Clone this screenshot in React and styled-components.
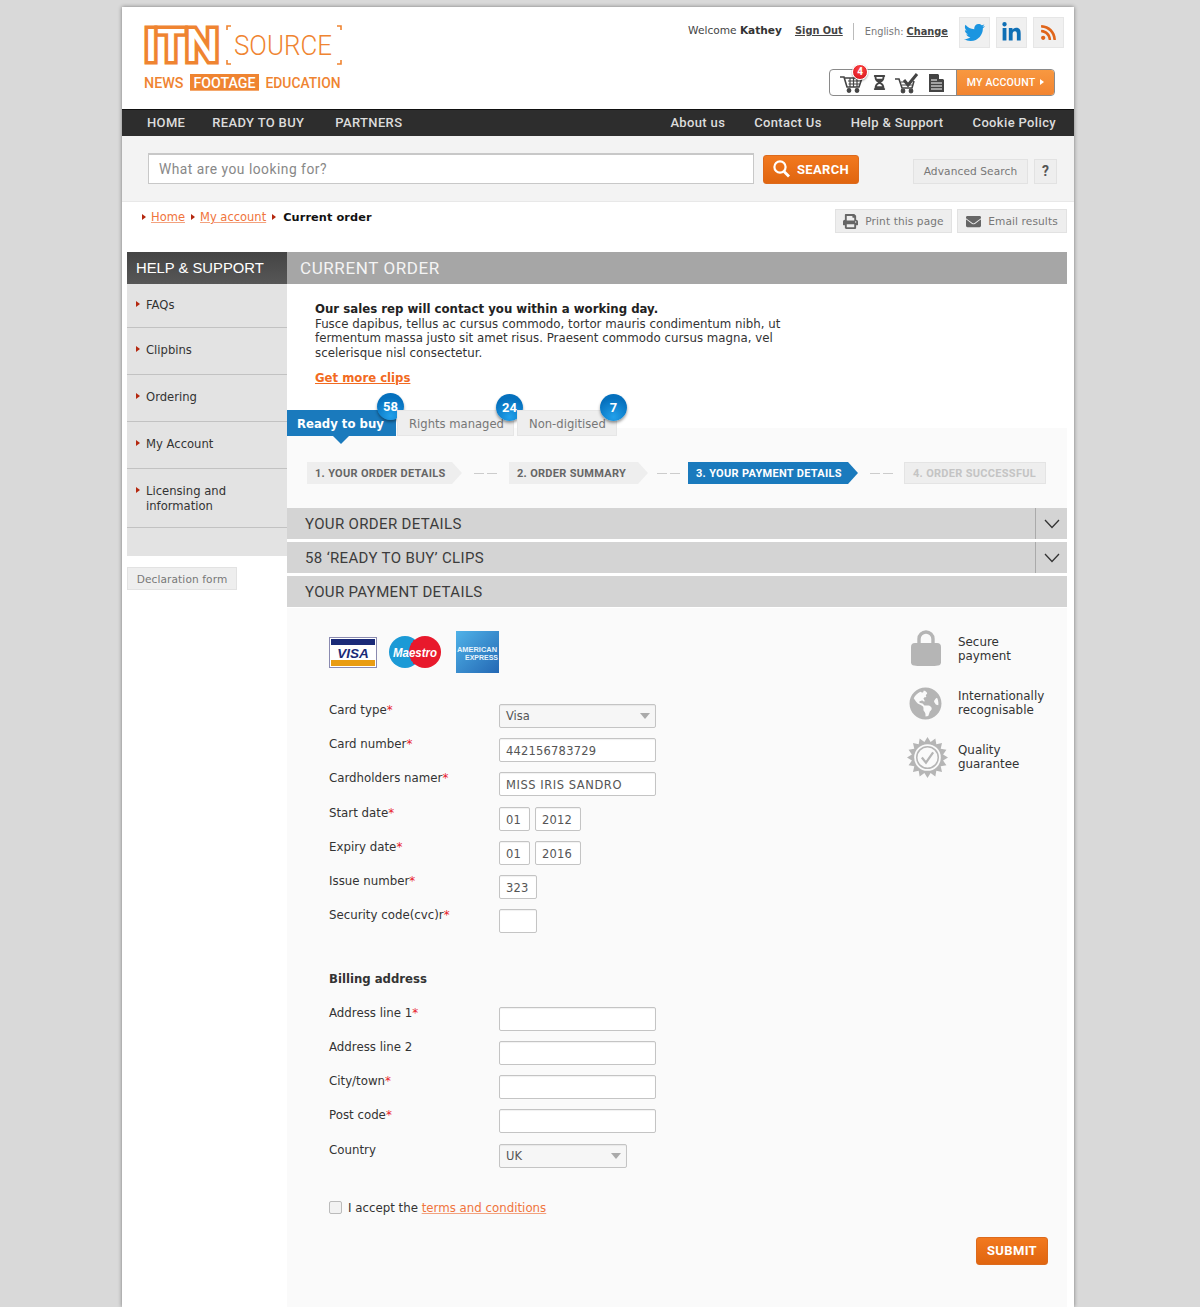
import React from 'react';
import styled, { createGlobalStyle, css } from 'styled-components';
import { FaTwitter, FaLinkedinIn, FaRss, FaPrint, FaEnvelope, FaGlobeAmericas, FaHourglassHalf } from 'react-icons/fa';

const VERDANA = `"DejaVu Sans", Verdana, sans-serif`;
const DIN = `Roboto, "Liberation Sans", sans-serif`;

const GlobalStyle = createGlobalStyle`
  html, body {
    margin: 0;
    height: 1307px;
    overflow: hidden;
    background: #d9d9d9;
  }
  body { font-family: ${VERDANA}; }
  * { box-sizing: border-box; }
`;

const Sheet = styled.div`
  width: 952px;
  height: 1300px;
  margin: 7px 0 0 122px;
  background: #fff;
  box-shadow: 0 0 4px rgba(0, 0, 0, 0.45);
  overflow: hidden;
`;

const Masthead = styled.header`
  height: 102px;
  display: flex;
  justify-content: space-between;
  padding: 10px 10px 0 21px;
`;

const LogoSvg = styled.svg`
  display: block;
  width: 200px;
  height: 70px;
  margin-top: 8px;
  overflow: visible;
`;

const TopRight = styled.div`
  display: flex;
  flex-direction: column;
  align-items: flex-end;
`;

const UserLine = styled.div`
  display: flex;
  align-items: center;
  height: 31px;
`;

const Welcome = styled.span`
  font-size: 10.6px;
  color: #444;
  margin-right: 13px;
  margin-top: -6px;
  b { color: #333; }
`;

const UserLink = styled.a`
  font-size: 9.8px;
  font-weight: bold;
  color: #444;
  text-decoration: underline;
  margin-top: -5px;
`;

const Divider = styled.span`
  width: 1px;
  height: 17px;
  background: #bbb;
  margin: -2px 11px 0 10px;
`;

const Lang = styled.span`
  font-size: 9.8px;
  color: #777;
  margin-right: 11px;
  margin-top: -2px;
  a { font-weight: bold; color: #444; text-decoration: underline; }
`;

const Social = styled.a`
  width: 31px;
  height: 31px;
  margin-left: ${(p) => (p.$first ? 0 : 6)}px;
  display: flex;
  align-items: center;
  justify-content: center;
  background: #f0f0f0;
  border: 1px solid #e6e6e6;
  font-size: ${(p) => p.$size}px;
  color: ${(p) => p.$color};
`;

const AccountBar = styled.div`
  display: flex;
  width: 226px;
  height: 27px;
  margin: 21px 9px 0 0;
  border: 1px solid #8a8a8a;
  border-radius: 4px;
  background: #fff;
`;

const AccountIcons = styled.div`
  position: relative;
  width: 127px;
  display: flex;
  align-items: center;
  padding-left: 9px;
  gap: 7px;
  border-right: 1px solid #8a8a8a;
`;

const CartBadge = styled.span`
  position: absolute;
  left: 22px;
  top: -6px;
  width: 16px;
  height: 16px;
  border-radius: 50%;
  background: radial-gradient(circle at 50% 30%, #f44, #d3101a);
  border: 1px solid #fff;
  color: #fff;
  font: bold 10px/14px ${DIN};
  text-align: center;
  box-shadow: 0 1px 2px rgba(0, 0, 0, 0.4);
`;

const AccountButton = styled.a`
  flex: 1;
  display: flex;
  align-items: center;
  justify-content: center;
  gap: 5px;
  background: linear-gradient(#f89840, #f28430);
  color: #fff;
  font: 500 10.6px ${DIN};
  letter-spacing: 0.15px;
  border-radius: 0 3px 3px 0;
  padding-bottom: 1px;
`;

const TinyArrow = styled.span`
  width: 0;
  height: 0;
  flex: none;
  border-left: 4px solid ${(p) => p.$color || '#fff'};
  border-top: 3.5px solid transparent;
  border-bottom: 3.5px solid transparent;
`;

const NavBar = styled.nav`
  height: 27px;
  display: flex;
  justify-content: space-between;
  align-items: center;
  padding: 0 18px 1px 25px;
  background: #2d2d2d;
  border-top: 1px solid #111;
`;

const NavGroup = styled.div`
  display: flex;
  gap: ${(p) => p.$gap}px;
`;

const NavLink = styled.a`
  margin-left: ${(p) => p.$ml || 0}px;
  font: 500 13px ${DIN};
  letter-spacing: 0.35px;
  color: #dcdcdc;
`;

const SearchBar = styled.div`
  height: 66px;
  display: flex;
  align-items: center;
  background: #f3f3f3;
  border-bottom: 1px solid #e8e8e8;
  padding: 0 17px 0 26px;
`;

const SearchInput = styled.div`
  width: 606px;
  height: 31px;
  padding-left: 10px;
  background: #fff;
  border: 1px solid #c8c8c8;
  border-width: 2px 1px 1px 1px;
  font: 13.8px/29px ${DIN};
  letter-spacing: 0.5px;
  color: #888;
`;

const OrangeButton = styled.a`
  display: inline-flex;
  align-items: center;
  justify-content: center;
  background: linear-gradient(#f2791f, #e0650f);
  border: 1px solid #dd6a1c;
  border-radius: 3px;
  color: #fff;
  font-family: ${DIN};
  font-weight: 700;
  font-size: 13px;
  letter-spacing: 0.35px;
`;

const SearchButton = styled(OrangeButton)`
  width: 96px;
  height: 29px;
  gap: 7px;
  margin: 1px 0 0 9px;
`;

const GreyButton = styled.a`
  display: inline-flex;
  align-items: center;
  justify-content: center;
  gap: 7px;
  height: ${(p) => p.$h || 24}px;
  width: ${(p) => p.$w}px;
  background: #eee;
  border: 1px solid #e2e2e2;
  color: #777;
  font-size: 10.6px;
  letter-spacing: 0.1px;
  svg { color: #666; font-size: 15px; }
`;

const SearchExtras = styled.div`
  margin-left: auto;
  display: flex;
  gap: 6px;
  padding-top: 5px;
`;

const HelpMark = styled(GreyButton)`
  font: bold 14px ${DIN};
  color: #555;
`;

const CrumbRow = styled.div`
  height: 50px;
  display: flex;
  justify-content: space-between;
  padding: 6px 7px 0 20px;
`;

const Crumbs = styled.div`
  display: flex;
  align-items: center;
  height: 18px;
  font-size: 11.5px;
  a { color: #f0743c; text-decoration: underline; text-decoration-color: #f3a27e; margin: 0 6px 0 5px; }
  b { color: #111; margin-left: 7px; letter-spacing: 0.1px; font-size: 11.3px; }
`;

const CrumbActions = styled.div`
  display: flex;
  gap: 5px;
  padding-top: 1px;
`;

const Columns = styled.div`
  display: flex;
  padding-left: 5px;
  width: 945px;
`;

const Sidebar = styled.aside`
  width: 160px;
  flex: none;
`;

const SideHead = styled.div`
  height: 32px;
  padding-left: 9px;
  background: linear-gradient(#444, #575757);
  color: #fff;
  font: 14.8px/33px "Liberation Sans", Arial, sans-serif;
`;

const SideItem = styled.a`
  display: flex;
  gap: 6px;
  height: ${(p) => p.$h}px;
  padding: ${(p) => p.$top}px 0 0 9px;
  background: #e3e3e3;
  border-bottom: 1px solid #c2c2c2;
  font-size: 11.6px;
  line-height: 15px;
  color: #333;
  ${TinyArrow} { margin-top: 3px; }
`;

const SideFill = styled.div`
  height: 28px;
  background: #e3e3e3;
`;

const DeclarationWrap = styled.div`
  padding-top: 11px;
`;

const Main = styled.main`
  flex: 1;
  min-width: 0;
`;

const PageTitle = styled.h1`
  margin: 0;
  height: 32px;
  padding-left: 13px;
  background: #a6a6a6;
  color: #f4f4f4;
  font: 400 17px/33px ${DIN};
  letter-spacing: 0.6px;
`;

const Intro = styled.section`
  padding: 18px 0 0 28px;
  height: 126px;
  width: 520px;
  font-size: 11.8px;
  line-height: 14.6px;
  color: #333;
  strong { display: block; color: #222; font-size: 11.75px; }
  p { margin: 0; }
`;

const MoreLink = styled.a`
  display: inline-block;
  margin-top: 11px;
  font-weight: bold;
  color: #f26a21;
  text-decoration: underline;
  font-size: 11.7px;
`;

const TabRow = styled.div`
  position: relative;
  z-index: 1;
  display: flex;
  gap: 1px;
  height: 26px;
  margin-bottom: -8px;
`;

const Tab = styled.a`
  position: relative;
  width: ${(p) => p.$w}px;
  margin-left: ${(p) => p.$ml || 0}px;
  display: flex;
  align-items: center;
  padding: 1px 0 0 ${(p) => p.$pl}px;
  font-size: 11.6px;
  ${(p) => (p.$active
    ? css`
      background: #1a7abd;
      color: #fff;
      font-weight: bold;
      font-size: 11.7px;
      &::after {
        content: '';
        position: absolute;
        left: 46px;
        top: 26px;
        border-top: 8px solid #1a7abd;
        border-left: 8px solid transparent;
        border-right: 8px solid transparent;
      }
    `
    : css`
      background: #eee;
      border: 1px solid #e6e6e6;
      color: #777;
    `)}
`;

const CountBadge = styled.span`
  position: absolute;
  right: ${(p) => p.$right}px;
  top: -17px;
  width: 27px;
  height: 27px;
  border-radius: 50%;
  background: radial-gradient(circle at 50% 85%, #22a0ea, #0570bd 70%);
  color: #fff;
  font: bold 13px/27px ${DIN};
  text-align: center;
  box-shadow: 0 2px 3px rgba(0, 0, 0, 0.4);
`;

const StepsPanel = styled.div`
  height: 80px;
  padding: 34px 0 0 20px;
  display: flex;
  background: #fafafa;
`;

const STEP_TONES = {
  done: css`background: #eee; color: #666;`,
  active: css`background: #1a7abd; color: #fff;`,
};

const Step = styled.span`
  height: 22px;
  width: ${(p) => p.$w}px;
  display: flex;
  align-items: center;
  padding-left: 8px;
  font: 700 11px ${DIN};
  letter-spacing: 0.3px;
  white-space: nowrap;
  clip-path: polygon(0 0, calc(100% - 10px) 0, 100% 50%, calc(100% - 10px) 100%, 0 100%);
  ${(p) => STEP_TONES[p.$tone]}
`;

const LastStep = styled.span`
  height: 22px;
  width: 142px;
  display: flex;
  align-items: center;
  padding-left: 8px;
  font: 700 11px ${DIN};
  letter-spacing: 0.3px;
  white-space: nowrap;
  background: #eee;
  border: 1px solid #e4e4e4;
  color: #c4c4c4;
`;

const StepDash = styled.span`
  width: ${(p) => p.$w}px;
  height: 22px;
  display: flex;
  align-items: center;
  justify-content: center;
  gap: 3px;
  i { width: 10px; height: 1px; background: #ccc; }
`;

const AccordionBar = styled.div`
  height: 31px;
  margin-bottom: 3px;
  display: flex;
  align-items: center;
  justify-content: space-between;
  background: #d4d4d4;
  padding-left: 18px;
  font: 400 15px ${DIN};
  letter-spacing: 0.35px;
  color: #3c3c3c;
`;

const ChevronCell = styled.span`
  width: 32px;
  align-self: stretch;
  display: flex;
  align-items: center;
  justify-content: center;
  border-left: 1px solid #aaa;
`;

const FormPanel = styled.div`
  height: 700px;
  margin-top: -2px;
  display: flex;
  justify-content: space-between;
  background: #fafafa;
  padding: 23px 19px 0 42px;
`;

const FormColumn = styled.form`
  width: 719px;
  flex: none;
  margin-right: -100%;
`;

const CardLogos = styled.div`
  display: flex;
  align-items: center;
  height: 42px;
  gap: 12px;
  margin-bottom: 31px;
`;

const AmexSvg = styled.svg`
  margin-left: 3px;
`;

const DocSvg = styled.svg`
  margin-left: 2px;
`;

const Row = styled.div`
  display: flex;
  height: 34.2px;
`;

const Label = styled.label`
  width: 170px;
  flex: none;
  margin-top: -1px;
  font-size: 11.8px;
  line-height: 14px;
  color: #333;
  i { color: #e8202a; font-style: normal; }
`;

const fieldBox = css`
  height: 24px;
  margin-right: 5px;
  padding-left: 6px;
  background: #fff;
  border: 1px solid #c4c4c4;
  border-radius: 2px;
  box-shadow: inset 0 1px 1px rgba(0, 0, 0, 0.06);
  font-size: 11.5px;
  line-height: 24px;
  color: #555;
`;

const Field = styled.div`
  ${fieldBox}
  width: ${(p) => p.$w}px;
  letter-spacing: ${(p) => p.$ls || 0.2}px;
`;

const SelectField = styled.div`
  ${fieldBox}
  width: ${(p) => p.$w}px;
  display: flex;
  align-items: center;
  justify-content: space-between;
  padding-right: 5px;
  background: #f6f6f6;
  &::after {
    content: '';
    border-top: 6px solid #aaa;
    border-left: 5px solid transparent;
    border-right: 5px solid transparent;
  }
`;

const SectionLabel = styled.div`
  margin: 29px 0 20.6px;
  font-size: 11.7px;
  font-weight: bold;
  line-height: 14px;
  color: #333;
`;

const Accept = styled.div`
  display: flex;
  align-items: center;
  margin-top: 23px;
  gap: 6px;
  font-size: 11.8px;
  line-height: 14px;
  color: #333;
  a { color: #f0743c; text-decoration: underline; text-decoration-color: #f3a27e; }
`;

const CheckBox = styled.span`
  width: 13px;
  height: 13px;
  background: #f2f2f2;
  border: 1px solid #bbb;
  border-radius: 2px;
`;

const SubmitRow = styled.div`
  display: flex;
  justify-content: flex-end;
  margin-top: 22px;
`;

const SubmitButton = styled(OrangeButton)`
  width: 72px;
  height: 28px;
  padding-bottom: 1px;
`;

const Features = styled.ul`
  list-style: none;
  width: 141px;
  margin: -9px 0 0 auto;
  padding: 0;
`;

const Feature = styled.li`
  display: flex;
  align-items: center;
  height: ${(p) => p.$h}px;
`;

const FeatureIcon = styled.span`
  width: 51px;
  flex: none;
  padding-left: ${(p) => p.$pad}px;
  margin-top: ${(p) => p.$shift || 0}px;
  display: flex;
  color: #b5b5b5;
  font-size: ${(p) => p.$size || 32}px;
`;

const FeatureText = styled.span`
  font-size: 11.9px;
  line-height: 14px;
  color: #333;
`;

const WireCart = () => (
  <svg width="26" height="22" viewBox="0 0 26 22" fill="none" stroke="#444" strokeWidth="1.2">
    <path d="M1 5h4l3 10h12l3-9H6" strokeWidth="1.6" />
    <path d="M9 9h13M9.5 12h11M11 6v9M14.5 6v9M18 6v9" />
    <circle cx="10" cy="18.5" r="1.8" fill="#444" />
    <circle cx="18" cy="18.5" r="1.8" fill="#444" />
  </svg>
);

const CheckedCart = () => (
  <svg width="26" height="22" viewBox="0 0 26 22" fill="none" stroke="#444" strokeWidth="1.2">
    <path d="M1 7h4l3 9h10l2-7" strokeWidth="1.6" />
    <path d="M7 10h6M8 13h10" />
    <path d="M10 8l4 5 9-11" strokeWidth="3" />
    <circle cx="9" cy="19" r="1.8" fill="#444" />
    <circle cx="17" cy="19" r="1.8" fill="#444" />
  </svg>
);

const DocIcon = () => (
  <DocSvg width="15" height="18" viewBox="0 0 15 18">
    <path d="M0 0h9l6 6v12H0z" fill="#444" />
    <path d="M10 0l5 5h-5z" fill="#fff" />
    <path d="M2 6h6M2 9h11M2 12h11M2 15h11" stroke="#fff" strokeWidth="1" />
  </DocSvg>
);

const SearchGlyph = () => (
  <svg width="17" height="18" viewBox="0 0 17 18" fill="none" stroke="#fff" strokeWidth="2.2">
    <circle cx="7" cy="7" r="5.6" />
    <path d="M11 11.5l5 5" strokeWidth="2.8" />
  </svg>
);

const Chevron = () => (
  <svg width="16" height="10" viewBox="0 0 16 10" fill="none" stroke="#333" strokeWidth="1.3">
    <path d="M1 1l7 7.5L15 1" />
  </svg>
);

const LockIcon = () => (
  <svg width="30" height="36" viewBox="0 0 30 36">
    <path d="M8 15V9a7 7 0 0 1 14 0v6" fill="none" stroke="#b5b5b5" strokeWidth="3.4" />
    <path d="M4 13h22a4 4 0 0 1 4 4v15a3 3 0 0 1-3 3.4 60 60 0 0 1-24 0 3 3 0 0 1-3-3.4V17a4 4 0 0 1 4-4z" fill="#b5b5b5" />
  </svg>
);

const sealPoints = Array.from({ length: 32 }, (_, i) => {
  const r = i % 2 ? 15.5 : 20;
  const a = (i * Math.PI) / 16;
  return `${20 + r * Math.cos(a)},${20 + r * Math.sin(a)}`;
}).join(' ');

const Seal = () => (
  <svg width="41" height="41" viewBox="0 0 40 40">
    <polygon points={sealPoints} fill="#b5b5b5" />
    <circle cx="20" cy="20" r="13" fill="#fafafa" />
    <circle cx="20" cy="20" r="10.5" fill="none" stroke="#b5b5b5" strokeWidth="1.5" />
    <path d="M14.5 20l4 5 7-10" fill="none" stroke="#b5b5b5" strokeWidth="2.2" />
  </svg>
);

const Logo = () => (
  <LogoSvg viewBox="0 0 200 70">
    <text x="1.5" y="35.5" fontFamily="Roboto" fontWeight="500" fontSize="44" fill="#fff" stroke="#ef8431"
      strokeWidth="7" paintOrder="stroke" textLength="74" lengthAdjust="spacingAndGlyphs">ITN</text>
    <path d="M84 5V1h4M84 35v4h4M194 1h4v4M198 35v4h-4" fill="none" stroke="#ef8431" strokeWidth="1.6" />
    <text x="91" y="29.5" fontFamily="Roboto" fontWeight="300" fontSize="27.5" fill="#ef8431"
      textLength="98" lengthAdjust="spacingAndGlyphs">SOURCE</text>
    <text x="1" y="63" fontFamily="Roboto" fontWeight="500" fontSize="15.5" fill="#ef8431"
      textLength="39.5" lengthAdjust="spacingAndGlyphs">NEWS</text>
    <rect x="47" y="49" width="69" height="16.7" fill="#ef8431" />
    <text x="50.5" y="63" fontFamily="Roboto" fontWeight="500" fontSize="15.5" fill="#fff"
      textLength="62" lengthAdjust="spacingAndGlyphs">FOOTAGE</text>
    <text x="122.5" y="63" fontFamily="Roboto" fontWeight="500" fontSize="15.5" fill="#ef8431"
      textLength="75" lengthAdjust="spacingAndGlyphs">EDUCATION</text>
  </LogoSvg>
);

const VisaLogo = () => (
  <svg width="48" height="31" viewBox="0 0 48 31">
    <rect x=".5" y=".5" width="47" height="30" fill="#fff" stroke="#8a8ab0" />
    <rect x="2" y="2" width="44" height="6" fill="#1a2a78" />
    <rect x="2" y="23" width="44" height="6" fill="#e99c12" />
    <text x="24" y="20.5" textAnchor="middle" fontFamily="Liberation Sans" fontWeight="bold" fontStyle="italic" fontSize="13.5" fill="#1a2a78">VISA</text>
  </svg>
);

const MaestroLogo = () => (
  <svg width="52" height="32" viewBox="0 0 52 32">
    <circle cx="16" cy="16" r="16" fill="#1b9ad6" />
    <circle cx="36" cy="16" r="16" fill="#e8192c" />
    <path d="M22 8h8M21 11h10M21 21h10M22 24h8M24 27h4M24 5h4" stroke="#e8192c" strokeWidth="1.3" />
    <text x="26" y="20.5" textAnchor="middle" fontFamily="Liberation Sans" fontWeight="bold" fontStyle="italic" fontSize="12" fill="#fff" textLength="44" lengthAdjust="spacingAndGlyphs">Maestro</text>
  </svg>
);

const AmexLogo = () => (
  <AmexSvg width="43" height="42" viewBox="0 0 43 42">
    <defs>
      <linearGradient id="amexFill" x1="0" y1="0" x2="1" y2="1">
        <stop offset="0" stopColor="#4fb2e8" />
        <stop offset="1" stopColor="#2468b4" />
      </linearGradient>
    </defs>
    <rect width="43" height="42" fill="url(#amexFill)" />
    <text x="1" y="21" fontFamily="Liberation Sans" fontWeight="bold" fontSize="7.5" fill="#e8f4fc" textLength="40" lengthAdjust="spacingAndGlyphs">AMERICAN</text>
    <text x="9" y="29" fontFamily="Liberation Sans" fontWeight="bold" fontSize="7.5" fill="#e8f4fc" textLength="33" lengthAdjust="spacingAndGlyphs">EXPRESS</text>
  </AmexSvg>
);

const SIDE_ITEMS = [
  { label: 'FAQs', h: 44, top: 14 },
  { label: 'Clipbins', h: 47, top: 15 },
  { label: 'Ordering', h: 47, top: 15 },
  { label: 'My Account', h: 47, top: 15 },
  { label: <>Licensing and<br />information</>, h: 59, top: 15 },
];

const TextRow = ({ label, req = true, children }) => (
  <Row>
    <Label>{label}{req && <i>*</i>}</Label>
    {children}
  </Row>
);

const App = () => (
  <>
    <GlobalStyle />
    <Sheet>
      <Masthead>
        <Logo />
        <TopRight>
          <UserLine>
            <Welcome>Welcome <b>Kathey</b></Welcome>
            <UserLink>Sign Out</UserLink>
            <Divider />
            <Lang>English: <a>Change</a></Lang>
            <Social $first $size={21} $color="#1b95e0"><FaTwitter /></Social>
            <Social $size={21} $color="#0f6fb5"><FaLinkedinIn /></Social>
            <Social $size={17} $color="#e0651a"><FaRss /></Social>
          </UserLine>
          <AccountBar>
            <AccountIcons>
              <WireCart />
              <CartBadge>4</CartBadge>
              <FaHourglassHalf color="#444" size={15} />
              <CheckedCart />
              <DocIcon />
            </AccountIcons>
            <AccountButton>MY ACCOUNT <TinyArrow /></AccountButton>
          </AccountBar>
        </TopRight>
      </Masthead>

      <NavBar>
        <NavGroup $gap={27}>
          <NavLink>HOME</NavLink>
          <NavLink>READY TO BUY</NavLink>
          <NavLink $ml={4}>PARTNERS</NavLink>
        </NavGroup>
        <NavGroup $gap={29}>
          <NavLink>About us</NavLink>
          <NavLink>Contact Us</NavLink>
          <NavLink>Help &amp; Support</NavLink>
          <NavLink>Cookie Policy</NavLink>
        </NavGroup>
      </NavBar>

      <SearchBar>
        <SearchInput>What are you looking for?</SearchInput>
        <SearchButton><SearchGlyph /> SEARCH</SearchButton>
        <SearchExtras>
          <GreyButton $w={115} $h={25}>Advanced Search</GreyButton>
          <HelpMark $w={23} $h={25}>?</HelpMark>
        </SearchExtras>
      </SearchBar>

      <CrumbRow>
        <Crumbs>
          <TinyArrow $color="#b5280f" />
          <a>Home</a>
          <TinyArrow $color="#b5280f" />
          <a>My account</a>
          <TinyArrow $color="#b5280f" />
          <b>Current order</b>
        </Crumbs>
        <CrumbActions>
          <GreyButton $w={117}><FaPrint /> Print this page</GreyButton>
          <GreyButton $w={110}><FaEnvelope /> Email results</GreyButton>
        </CrumbActions>
      </CrumbRow>

      <Columns>
        <Sidebar>
          <SideHead>HELP &amp; SUPPORT</SideHead>
          {SIDE_ITEMS.map((item, i) => (
            <SideItem key={i} $h={item.h} $top={item.top}>
              <TinyArrow $color="#b5280f" />
              <span>{item.label}</span>
            </SideItem>
          ))}
          <SideFill />
          <DeclarationWrap>
            <GreyButton $w={110} $h={23}>Declaration form</GreyButton>
          </DeclarationWrap>
        </Sidebar>

        <Main>
          <PageTitle>CURRENT ORDER</PageTitle>
          <Intro>
            <strong>Our sales rep will contact you within a working day.</strong>
            <p>Fusce dapibus, tellus ac cursus commodo, tortor mauris condimentum nibh, ut fermentum massa justo sit amet risus. Praesent commodo cursus magna, vel scelerisque nisl consectetur.</p>
            <MoreLink>Get more clips</MoreLink>
          </Intro>

          <TabRow>
            <Tab $active $w={109} $pl={10}>Ready to buy<CountBadge $right={-8}>58</CountBadge></Tab>
            <Tab $w={117} $pl={11}>Rights managed<CountBadge $right={-10}>24</CountBadge></Tab>
            <Tab $w={100} $ml={2} $pl={11}>Non-digitised<CountBadge $right={-11}>7</CountBadge></Tab>
          </TabRow>

          <StepsPanel>
            <Step $w={155} $tone="done">1. YOUR ORDER DETAILS</Step>
            <StepDash $w={47}><i /><i /></StepDash>
            <Step $w={139} $tone="done">2. ORDER SUMMARY</Step>
            <StepDash $w={40}><i /><i /></StepDash>
            <Step $w={170} $tone="active">3. YOUR PAYMENT DETAILS</Step>
            <StepDash $w={46}><i /><i /></StepDash>
            <LastStep>4. ORDER SUCCESSFUL</LastStep>
          </StepsPanel>

          <AccordionBar>YOUR ORDER DETAILS<ChevronCell><Chevron /></ChevronCell></AccordionBar>
          <AccordionBar>58 ‘READY TO BUY’ CLIPS<ChevronCell><Chevron /></ChevronCell></AccordionBar>
          <AccordionBar>YOUR PAYMENT DETAILS</AccordionBar>

          <FormPanel>
            <FormColumn>
              <CardLogos>
                <VisaLogo />
                <MaestroLogo />
                <AmexLogo />
              </CardLogos>
              <TextRow label="Card type"><SelectField $w={157}>Visa</SelectField></TextRow>
              <TextRow label="Card number"><Field $w={157}>442156783729</Field></TextRow>
              <TextRow label="Cardholders namer"><Field $w={157} $ls={0.55}>MISS IRIS SANDRO</Field></TextRow>
              <TextRow label="Start date"><Field $w={31}>01</Field><Field $w={46}>2012</Field></TextRow>
              <TextRow label="Expiry date"><Field $w={31}>01</Field><Field $w={46}>2016</Field></TextRow>
              <TextRow label="Issue number"><Field $w={38}>323</Field></TextRow>
              <TextRow label="Security code(cvc)r"><Field $w={38} /></TextRow>
              <SectionLabel>Billing address</SectionLabel>
              <TextRow label="Address line 1"><Field $w={157} /></TextRow>
              <TextRow label="Address line 2" req={false}><Field $w={157} /></TextRow>
              <TextRow label="City/town"><Field $w={157} /></TextRow>
              <TextRow label="Post code"><Field $w={157} /></TextRow>
              <TextRow label="Country" req={false}><SelectField $w={128}>UK</SelectField></TextRow>
              <Accept><CheckBox /><span>I accept the <a>terms and conditions</a></span></Accept>
              <SubmitRow><SubmitButton>SUBMIT</SubmitButton></SubmitRow>
            </FormColumn>
            <Features>
              <Feature $h={54}>
                <FeatureIcon $pad={4} $shift={-2}><LockIcon /></FeatureIcon>
                <FeatureText>Secure<br />payment</FeatureText>
              </Feature>
              <Feature $h={54}>
                <FeatureIcon $pad={2} $size={33}><FaGlobeAmericas /></FeatureIcon>
                <FeatureText>Internationally<br />recognisable</FeatureText>
              </Feature>
              <Feature $h={54}>
                <FeatureIcon $pad={0}><Seal /></FeatureIcon>
                <FeatureText>Quality<br />guarantee</FeatureText>
              </Feature>
            </Features>
          </FormPanel>
        </Main>
      </Columns>
    </Sheet>
  </>
);

export default App;
